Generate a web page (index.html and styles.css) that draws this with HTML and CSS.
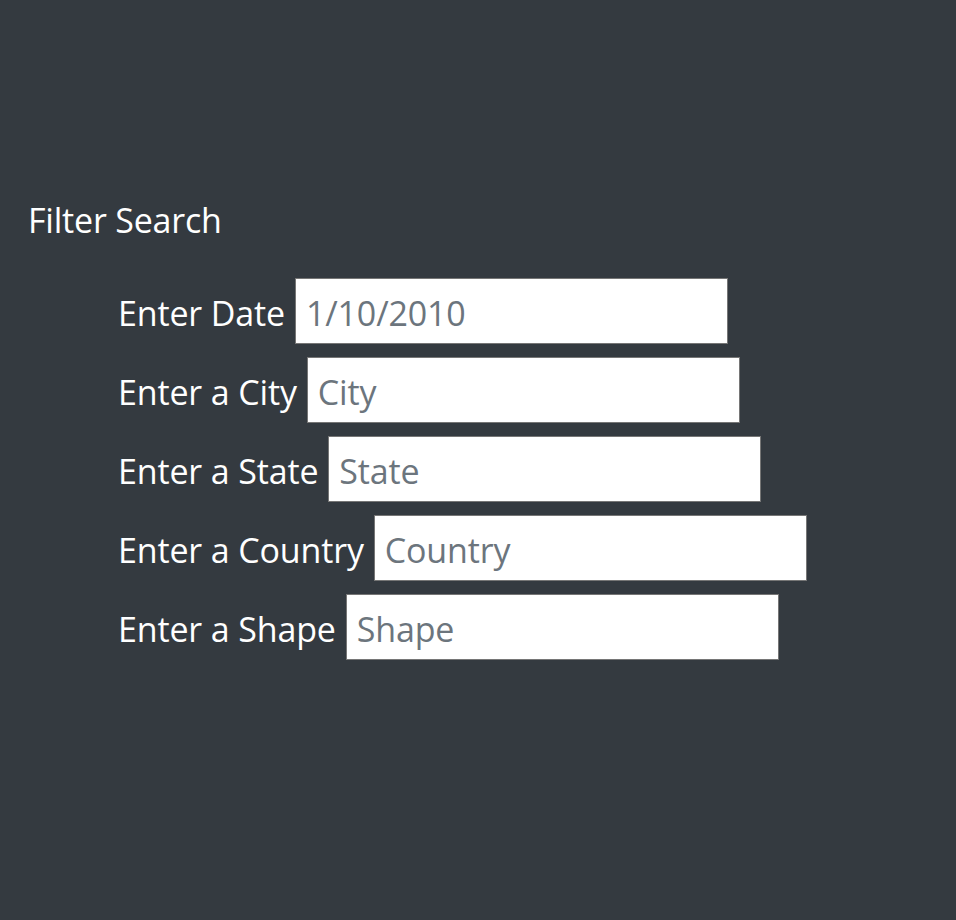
FILE: index.html
```html
<!DOCTYPE html>
<html>
<head>
<meta charset="utf-8">
<link rel="stylesheet" href="styles.css">
</head>
<body>
<main class="page">
  <h2 class="title">Filter Search</h2>
  <form class="filters">
    <div class="row"><label class="label" for="date">Enter Date</label><input class="field" id="date" type="text" placeholder="1/10/2010"></div>
    <div class="row"><label class="label" for="city">Enter a City</label><input class="field" id="city" type="text" placeholder="City"></div>
    <div class="row"><label class="label" for="state">Enter a State</label><input class="field" id="state" type="text" placeholder="State"></div>
    <div class="row"><label class="label" for="country">Enter a Country</label><input class="field" id="country" type="text" placeholder="Country"></div>
    <div class="row"><label class="label" for="shape">Enter a Shape</label><input class="field" id="shape" type="text" placeholder="Shape"></div>
  </form>
</main>
</body>
</html>
```
FILE: styles.css
```css
html, body {
  margin: 0;
  padding: 0;
  background: #343a40;
  height: 100%;
}
body {
  font-family: "Open Sans", "Noto Sans", sans-serif;
  color: #ffffff;
}
.page {
  padding: 196px 0 0 28px;
}
.title {
  margin: 0;
  padding-top: 1px;
  font-weight: 400;
  font-size: 34px;
  line-height: 46px;
  letter-spacing: -0.2px;
}
.filters {
  margin: 35px 0 0 90px;
  display: flex;
  flex-direction: column;
  gap: 13px;
}
.row {
  display: flex;
  align-items: center;
  gap: 10px;
}
.label {
  font-size: 34px;
  line-height: 46px;
  letter-spacing: -0.15px;
  padding-top: 3px;
}
.field {
  box-sizing: border-box;
  width: 433px;
  height: 66px;
  margin: 0;
  padding: 3px 10px 0;
  border: 1px solid #767676;
  border-radius: 0;
  background: #ffffff;
  font-family: inherit;
  font-size: 34px;
  letter-spacing: -0.15px;
  color: #495057;
  outline: none;
}
.field::placeholder {
  color: #6c757d;
  opacity: 1;
}
```
